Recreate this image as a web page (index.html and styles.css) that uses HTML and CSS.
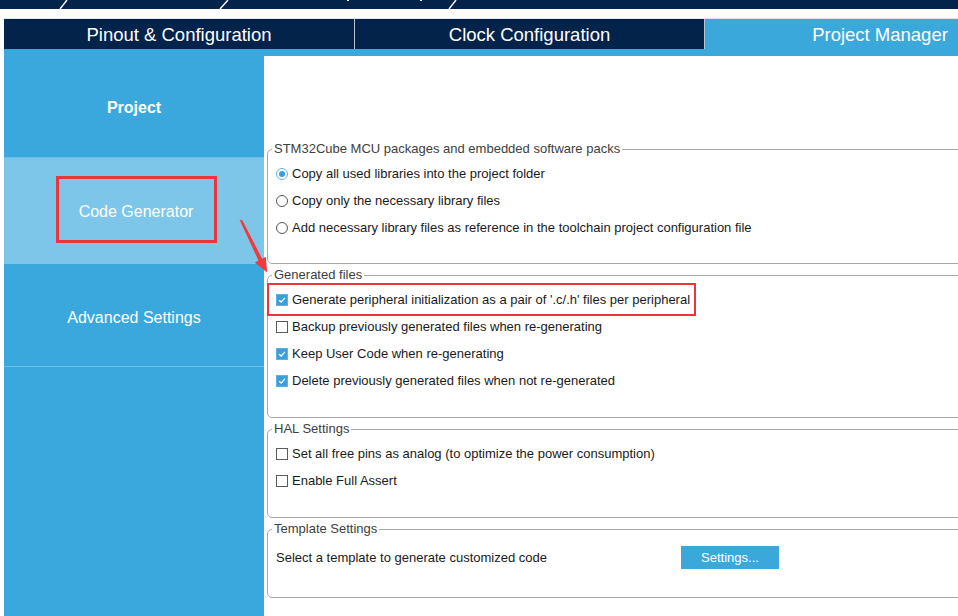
FILE: index.html
```html
<!DOCTYPE html>
<html lang="en">
<head>
    <meta charset="UTF-8">
    <meta name="viewport" content="width=device-width, initial-scale=1.0">
    <title>Project Manager - Code Generator</title>
    <link rel="stylesheet" href="styles.css">
</head>
<body>
    <div class="topbar">
        <svg width="958" height="9" viewBox="0 0 958 9">
            <line x1="60" y1="9" x2="67" y2="0" stroke="#fff" stroke-width="1.4"/>
            <line x1="220" y1="9" x2="228" y2="0" stroke="#fff" stroke-width="1.4"/>
            <line x1="449" y1="9" x2="456" y2="0" stroke="#fff" stroke-width="1.4"/>
            <rect x="347" y="0" width="2" height="1" fill="#fff"/>
            <rect x="420" y="0" width="2" height="1" fill="#fff"/>
        </svg>
    </div>

    <div class="page">
        <div class="tabs">
            <div class="tab">Pinout &amp; Configuration</div>
            <div class="tab">Clock Configuration</div>
            <div class="tab active">Project Manager</div>
        </div>
        <div class="tab-strip"></div>

        <div class="main">
            <nav class="sidebar">
                <div class="side-item first"><b>Project</b></div>
                <div class="side-item selected"><span class="marked">Code Generator</span></div>
                <div class="side-item last">Advanced Settings</div>
            </nav>

            <div class="content">
                <fieldset class="group first-group">
                    <legend>STM32Cube MCU packages and embedded software packs</legend>
                    <div class="row"><span class="radio on"></span>Copy all used libraries into the project folder</div>
                    <div class="row"><span class="radio"></span>Copy only the necessary library files</div>
                    <div class="row"><span class="radio"></span>Add necessary library files as reference in the toolchain project configuration file</div>
                </fieldset>

                <fieldset class="group">
                    <legend>Generated files</legend>
                    <div class="row marked-row"><span class="check on"><svg viewBox="0 0 12 12"><path d="M2.6 6.2 L5 8.5 L9.5 3.4" fill="none" stroke="#fff" stroke-width="1.6"/></svg></span>Generate peripheral initialization as a pair of '.c/.h' files per peripheral</div>
                    <div class="row"><span class="check"></span>Backup previously generated files when re-generating</div>
                    <div class="row"><span class="check on"><svg viewBox="0 0 12 12"><path d="M2.6 6.2 L5 8.5 L9.5 3.4" fill="none" stroke="#fff" stroke-width="1.6"/></svg></span>Keep User Code when re-generating</div>
                    <div class="row"><span class="check on"><svg viewBox="0 0 12 12"><path d="M2.6 6.2 L5 8.5 L9.5 3.4" fill="none" stroke="#fff" stroke-width="1.6"/></svg></span>Delete previously generated files when not re-generated</div>
                </fieldset>

                <fieldset class="group">
                    <legend>HAL Settings</legend>
                    <div class="row"><span class="check"></span>Set all free pins as analog (to optimize the power consumption)</div>
                    <div class="row"><span class="check"></span>Enable Full Assert</div>
                </fieldset>

                <fieldset class="group template-group">
                    <legend>Template Settings</legend>
                    <div class="row template-row">
                        <span class="template-label">Select a template to generate customized code</span>
                        <button class="btn">Settings...</button>
                    </div>
                </fieldset>
            </div>

            <!-- annotation arrow -->
            <svg class="arrow" width="40" height="60" viewBox="230 215 40 60">
                <polygon points="235.5,218.5 238.5,219.5 258.1,257.7 261.8,255.7 263.2,271.5 250.8,261.6 254.5,259.6" fill="#ee3b3b"/>
            </svg>
        </div>
    </div>
</body>
</html>
```

FILE: styles.css
```css
body {
    margin: 0;
    width: 958px;
    height: 616px;
    overflow: hidden;
    background-color: #fff;
    font-family: "Liberation Sans", Arial, sans-serif;
}
.topbar {
    height: 9px;
    background-color: #03234b;
}
.topbar svg {
    display: block;
}
.page {
    padding: 9px 0 0 4px;
    overflow: hidden;
}
.tabs {
    display: grid;
    grid-template-columns: 350px 349px 350px;
    column-gap: 1px;
    width: 1052px;
    height: 30px;
    background-color: #b9c3cf;
    border-top: 1px solid #dfe4ea;
}
.tab {
    display: flex;
    align-items: center;
    justify-content: center;
    padding-top: 2px;
    background-color: #03234b;
    color: #fff;
    font-size: 18.5px;
}
.tab.active {
    background-color: #3ba8dc;
}
.tab-strip {
    height: 7px;
    background-color: #3ba8dc;
}
.main {
    position: relative;
    display: flex;
    height: 561px;
}
.sidebar {
    width: 260px;
    flex: none;
    background-color: #3aa8dc;
}
.side-item {
    display: flex;
    align-items: center;
    justify-content: center;
    height: 103px;
    box-sizing: border-box;
    color: #fff;
    font-size: 16px;
}
.side-item.first {
    height: 102px;
    padding-top: 2px;
    border-bottom: 1px solid #6ebde6;
}
.side-item.selected {
    height: 106px;
    background-color: #7ec6e9;
}
.side-item.last {
    padding-top: 6px;
    border-bottom: 1px solid #6ebde6;
}
.marked {
    display: flex;
    align-items: center;
    justify-content: center;
    width: 161px;
    height: 67px;
    box-sizing: border-box;
    padding-top: 5px;
    border: 3px solid #e8373c;
    margin: 0 0 3px 4px;
}
.content {
    flex: 1;
    padding: 86px 0 0 3px;
    overflow: hidden;
}
.group {
    width: 720px;
    box-sizing: border-box;
    margin: 4px 0 0 0;
    padding: 4px 0 23px 8px;
    border: 1px solid #a9a9a9;
    border-radius: 5px;
}
.group.first-group {
    margin-top: 0;
    padding-bottom: 22px;
}
.group.template-group {
    padding-top: 8px;
    padding-bottom: 26px;
}
legend {
    padding: 0 2px;
    margin-left: -4px;
    font-size: 13px;
    line-height: 14px;
    color: #404040;
}
.row {
    display: flex;
    align-items: center;
    height: 27px;
    font-size: 13px;
    color: #1a1a1a;
}
.marked-row {
    position: relative;
}
.marked-row::after {
    content: "";
    position: absolute;
    left: -9px;
    top: -3px;
    bottom: -3px;
    width: 429px;
    box-sizing: border-box;
    border: 2px solid #e8373c;
}
.check {
    width: 12px;
    height: 12px;
    box-sizing: border-box;
    border: 1px solid #5a5a5a;
    background-color: #fff;
    margin-right: 4px;
    flex: none;
}
.check.on {
    background-color: #3c9fd9;
    border-color: #5eb2e2;
}
.check svg {
    display: block;
    width: 10px;
    height: 10px;
}
.radio {
    position: relative;
    width: 12px;
    height: 12px;
    box-sizing: border-box;
    border: 1px solid #555;
    border-radius: 50%;
    background-color: #fff;
    margin-right: 4px;
    flex: none;
}
.radio.on {
    border-color: #5fb3e3;
}
.radio.on::after {
    content: "";
    position: absolute;
    left: 2px;
    top: 2px;
    width: 6px;
    height: 6px;
    border-radius: 50%;
    background-color: #3a9ed8;
}
.template-label {
    width: 405px;
}
.btn {
    width: 98px;
    height: 23px;
    border: none;
    background-color: #3ba8dc;
    color: #fff;
    font-family: "Liberation Sans", Arial, sans-serif;
    font-size: 13px;
    padding: 0;
}
.arrow {
    position: absolute;
    left: 230px;
    top: 160px;
}
```
